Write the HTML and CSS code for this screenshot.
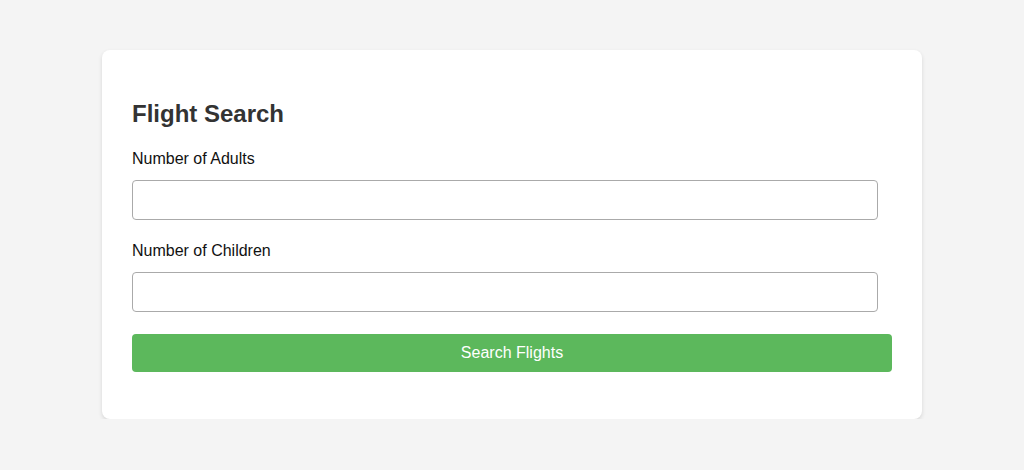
FILE: index.html
```html
<!DOCTYPE html>
<html lang="en">
<head>
<meta charset="utf-8">
<title>Flight Search</title>
<link rel="stylesheet" href="styles.css">
</head>
<body>
<div class="page">
  <div class="card">
    <h2 class="title">Flight Search</h2>
    <form class="form">
      <div class="group">
        <label class="label" for="adults">Number of Adults</label>
        <input class="input" id="adults" type="number">
      </div>
      <div class="group">
        <label class="label" for="children">Number of Children</label>
        <input class="input" id="children" type="number">
      </div>
      <button class="button" type="button">Search Flights</button>
    </form>
  </div>
</div>
</body>
</html>
```

FILE: styles.css
```css
html, body {
  margin: 0;
  padding: 0;
  background: #f4f4f4;
  font-family: "Liberation Sans", Arial, sans-serif;
}

.page {
  padding-top: 50px;
}

.card {
  width: 760px;
  margin: 0 auto;
  padding: 30px 30px 47px;
  background: #ffffff;
  border-radius: 8px;
  box-shadow: 0 2px 4px rgba(0, 0, 0, 0.12);
}

.title {
  margin: 20px 0 23px;
  font-size: 24px;
  font-weight: bold;
  color: #333333;
  line-height: 27px;
}

.form {
  margin: 0;
}

.group {
  margin-bottom: 22px;
}

.label {
  display: block;
  font-size: 16px;
  line-height: 18px;
  color: #111111;
  margin-bottom: 12px;
}

.input {
  display: block;
  box-sizing: border-box;
  width: calc(100% - 14px);
  height: 40px;
  margin: 0;
  padding: 8px;
  border: 1px solid #aaaaaa;
  border-radius: 4px;
  font-size: 16px;
  font-family: inherit;
  background: #ffffff;
}

.button {
  display: block;
  width: 100%;
  height: 38px;
  margin-top: 3px;
  border: none;
  border-radius: 4px;
  background: #5cb85c;
  color: #ffffff;
  font-size: 16px;
  font-family: inherit;
}
```
